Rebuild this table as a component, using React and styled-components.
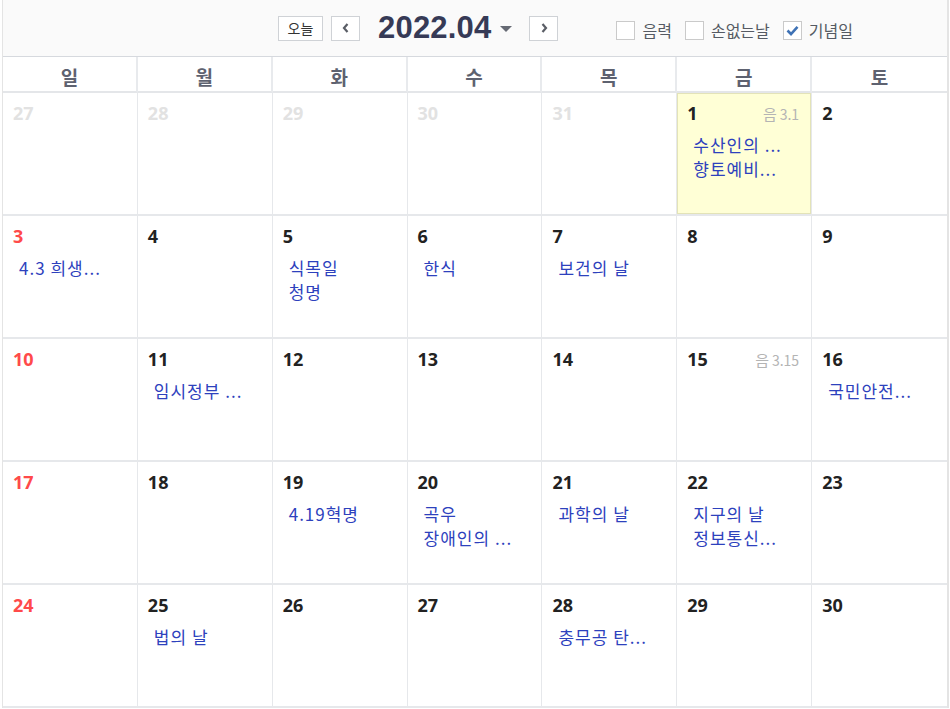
import React from "react";
import styled, { createGlobalStyle } from "styled-components";

const GlobalStyle = createGlobalStyle`
  body {
    margin: 0;
    background: #ffffff;
    font-family: "Noto Sans CJK KR", "Noto Sans", sans-serif;
  }
`;

const Wrapper = styled.div`
  margin-left: 2px;
  width: 944px;
  border-left: 1px solid #e4e4e4;
  border-right: 2px solid #e4e4e4;
`;

const TopBar = styled.div`
  height: 57px;
  background-color: #fafafa;
  border-bottom: 1px solid #d6d9de;
  display: flex;
  align-items: center;
  padding-left: 275px;
  box-sizing: border-box;
`;

const NavBtn = styled.button`
  height: 25px;
  min-width: ${(p) => (p.wide ? "45px" : "29px")};
  padding: 0 ${(p) => (p.wide ? "8px" : "0")};
  background: #ffffff;
  border: 1px solid #cfd2d6;
  border-radius: 0;
  font-family: "Noto Sans CJK KR", sans-serif;
  font-size: 14px;
  color: #333;
  display: flex;
  align-items: center;
  justify-content: center;
  margin-right: ${(p) => p.mr || 0}px;
  box-sizing: border-box;
  cursor: pointer;
`;

const MonthTitle = styled.div`
  font-family: "Liberation Sans", Arial, sans-serif;
  font-weight: 700;
  font-size: 31px;
  color: #363a56;
  margin-left: 18px;
  display: flex;
  align-items: center;
  letter-spacing: 0.2px;
`;

const Caret = styled.span`
  width: 0;
  height: 0;
  border-left: 6px solid transparent;
  border-right: 6px solid transparent;
  border-top: 6px solid #666a74;
  margin-left: 9px;
  margin-right: 17px;
  margin-top: 2px;
`;

const Options = styled.div`
  display: flex;
  align-items: center;
  margin-left: 58px;
  margin-top: 4px;
`;

const Option = styled.label`
  display: flex;
  align-items: center;
  font-size: 16px;
  color: #555a63;
  margin-right: 13px;
`;

const Box = styled.span`
  width: 17px;
  height: 17px;
  border: 1px solid #cacaca;
  background: #ffffff;
  margin-right: 7px;
  display: flex;
  align-items: center;
  justify-content: center;
`;

const Grid = styled.div`
  display: grid;
  grid-template-columns: repeat(7, 1fr);
`;

const DayHead = styled.div`
  height: 36px;
  box-sizing: border-box;
  padding-top: 4px;
  border-bottom: 2px solid #e4e6e9;
  border-right: ${(p) => (p.last ? "none" : "2px solid #e8eaed")};
  display: flex;
  align-items: center;
  justify-content: center;
  font-size: 19px;
  font-weight: 700;
  color: #5e6270;
`;

const Cell = styled.div`
  height: 123px;
  border-bottom: 2px solid #e6e8eb;
  border-right: ${(p) => (p.last ? "none" : "1px solid #e6e8eb")};
  background: ${(p) => (p.today ? "#ffffd6" : "#ffffff")};
  box-shadow: ${(p) => (p.today ? "inset 0 0 0 1px #e3e3b8" : "none")};
  padding: 8px 12px 0 10px;
  box-sizing: border-box;
  overflow: hidden;
`;

const CellTop = styled.div`
  display: flex;
  justify-content: space-between;
  align-items: baseline;
`;

const DayNum = styled.span`
  font-family: "Noto Sans", sans-serif;
  font-weight: 700;
  font-size: 18px;
  color: ${(p) => (p.muted ? "#e2e2e2" : p.sun ? "#ff4a4a" : "#222222")};
`;

const Lunar = styled.span`
  font-size: 14px;
  color: #b4b4b4;
  & b {
    font-weight: 400;
    font-size: 15px;
    margin-right: 3px;
  }
`;

const Events = styled.div`
  margin-top: 8px;
  padding-left: 6px;
`;

const Event = styled.div`
  font-size: 17px;
  line-height: 24px;
  letter-spacing: 1px;
  color: #2d41bd;
  white-space: nowrap;
`;

const Chevron = ({ dir }) => (
  <svg width="10" height="12" viewBox="0 0 10 12">
    <path
      d={dir === "left" ? "M6.5 2 L3 6 L6.5 10" : "M3.5 2 L7 6 L3.5 10"}
      fill="none"
      stroke="#5a5e66"
      strokeWidth="2.2"
    />
  </svg>
);

const Check = () => (
  <svg width="13" height="11" viewBox="0 0 13 11">
    <path d="M1.5 5.5 L5 9 L11.5 1.8" fill="none" stroke="#3f72b5" strokeWidth="2.6" />
  </svg>
);

const days = ["일", "월", "화", "수", "목", "금", "토"];

const weeks = [
  [
    { d: 27, muted: true },
    { d: 28, muted: true },
    { d: 29, muted: true },
    { d: 30, muted: true },
    { d: 31, muted: true },
    { d: 1, today: true, lunar: "3.1", events: ["수산인의 ...", "향토예비..."] },
    { d: 2 },
  ],
  [
    { d: 3, events: ["4.3 희생..."] },
    { d: 4 },
    { d: 5, events: ["식목일", "청명"] },
    { d: 6, events: ["한식"] },
    { d: 7, events: ["보건의 날"] },
    { d: 8 },
    { d: 9 },
  ],
  [
    { d: 10 },
    { d: 11, events: ["임시정부 ..."] },
    { d: 12 },
    { d: 13 },
    { d: 14 },
    { d: 15, lunar: "3.15" },
    { d: 16, events: ["국민안전..."] },
  ],
  [
    { d: 17 },
    { d: 18 },
    { d: 19, events: ["4.19혁명"] },
    { d: 20, events: ["곡우", "장애인의 ..."] },
    { d: 21, events: ["과학의 날"] },
    { d: 22, events: ["지구의 날", "정보통신..."] },
    { d: 23 },
  ],
  [
    { d: 24 },
    { d: 25, events: ["법의 날"] },
    { d: 26 },
    { d: 27 },
    { d: 28, events: ["충무공 탄..."] },
    { d: 29 },
    { d: 30 },
  ],
];

const options = [
  { label: "음력", checked: false },
  { label: "손없는날", checked: false },
  { label: "기념일", checked: true },
];

export default function App() {
  return (
    <Wrapper>
      <GlobalStyle />
      <TopBar>
        <NavBtn wide mr={8}>오늘</NavBtn>
        <NavBtn>
          <Chevron dir="left" />
        </NavBtn>
        <MonthTitle>
          2022.04
          <Caret />
        </MonthTitle>
        <NavBtn>
          <Chevron dir="right" />
        </NavBtn>
        <Options>
          {options.map((o) => (
            <Option key={o.label}>
              <Box>{o.checked && <Check />}</Box>
              {o.label}
            </Option>
          ))}
        </Options>
      </TopBar>

      <Grid>
        {days.map((d, i) => (
          <DayHead key={d} last={i === 6}>
            {d}
          </DayHead>
        ))}
        {weeks.map((week, w) =>
          week.map((c, i) => (
            <Cell key={w + "-" + i} last={i === 6} today={c.today}>
              <CellTop>
                <DayNum muted={c.muted} sun={i === 0}>
                  {c.d}
                </DayNum>
                {c.lunar && (
                  <Lunar>
                    <b>음</b>
                    {c.lunar}
                  </Lunar>
                )}
              </CellTop>
              {c.events && (
                <Events>
                  {c.events.map((e) => (
                    <Event key={e}>{e}</Event>
                  ))}
                </Events>
              )}
            </Cell>
          ))
        )}
      </Grid>
    </Wrapper>
  );
}
